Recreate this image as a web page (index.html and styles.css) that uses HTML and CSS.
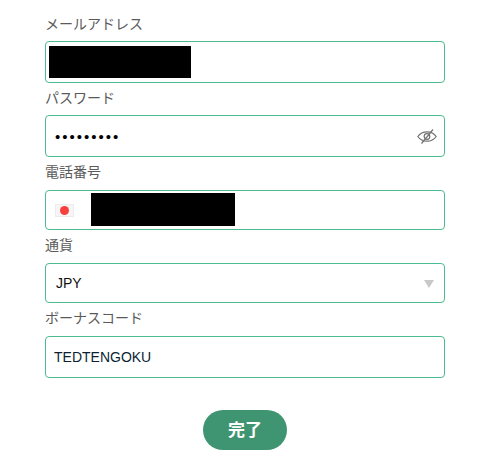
FILE: index.html
```html
<!DOCTYPE html>
<html lang="ja">
<head>
    <meta charset="UTF-8">
    <title>登録</title>
    <link rel="stylesheet" href="styles.css">
</head>
<body>
    <form class="form">
        <div class="field">
            <label class="label">メールアドレス</label>
            <div class="box box-tall">
                <span class="mask mask-mail"></span>
            </div>
        </div>
        <div class="field">
            <label class="label">パスワード</label>
            <div class="box box-tall box-pass">
                <span class="dots">•••••••••</span>
                <svg class="eye" width="20" height="15" viewBox="0 0 20 15" fill="none" stroke="#707070" stroke-width="1.2">
                    <path d="M.8 7.500C3 4.400 6.200 2.800 10 2.800s7 1.600 9.200 4.700c-2.200 3.100-5.400 4.700-9.200 4.700S3 10.600.8 7.500z"/>
                    <circle cx="10" cy="7.500" r="2.800"/>
                    <path d="M16 .5L4.500 14.500"/>
                </svg>
            </div>
        </div>
        <div class="field field-wide">
            <label class="label">電話番号</label>
            <div class="box box-phone">
                <span class="flag"><span class="flag-sun"></span></span>
                <span class="mask mask-phone"></span>
            </div>
        </div>
        <div class="field field-wide">
            <label class="label">通貨</label>
            <div class="box box-select">
                <span class="value">JPY</span>
                <span class="arrow"></span>
            </div>
        </div>
        <div class="field field-wide">
            <label class="label">ボーナスコード</label>
            <div class="box box-tall">
                <span class="value value-code">TEDTENGOKU</span>
            </div>
        </div>
        <div class="actions">
            <button class="submit" type="button">完了</button>
        </div>
    </form>
</body>
</html>
```

FILE: styles.css
```css
html, body {
    margin: 0;
    padding: 0;
    background: #fff;
}

body {
    font-family: "Noto Sans CJK JP", "Liberation Sans", sans-serif;
}

.form {
    width: 400px;
    padding: 9px 0 0 45px;
}

.field {
    display: flex;
    flex-direction: column;
}

.label {
    height: 32px;
    line-height: 29px;
    font-size: 14px;
    color: #5a5a5a;
}

.field-wide .label {
    height: 33px;
}

.box {
    box-sizing: border-box;
    height: 40px;
    display: flex;
    align-items: center;
    border: 1px solid #4cbb8f;
    border-radius: 4px;
    background: #fff;
}

.box-tall {
    height: 42px;
}

.box-pass {
    padding: 0 7px 0 9px;
    justify-content: space-between;
}

.box-phone {
    padding-left: 9px;
}

.box-select {
    padding: 0 10px 0 10px;
    justify-content: space-between;
}

.mask {
    display: block;
    background: #000;
}

.mask-mail {
    width: 142px;
    height: 32px;
    margin-left: 3px;
}

.mask-phone {
    width: 144px;
    height: 33px;
    margin: 0 0 1px 17px;
}

.dots {
    font-family: "Liberation Sans", sans-serif;
    font-size: 15px;
    letter-spacing: 2px;
    color: #000;
}

.eye {
    display: block;
}

.flag {
    box-sizing: border-box;
    width: 19px;
    height: 13px;
    display: flex;
    align-items: center;
    justify-content: center;
    background: #f7f5f5;
    border: 1px solid #ececec;
    margin-top: 1px;
}

.flag-sun {
    width: 9px;
    height: 9px;
    border-radius: 50%;
    background: #f6403f;
}

.value {
    font-family: "Liberation Sans", sans-serif;
    font-size: 14px;
    color: #111;
}

.value-code {
    margin-left: 8px;
    color: #0c1f33;
}

.arrow {
    width: 0;
    height: 0;
    border-left: 5px solid transparent;
    border-right: 5px solid transparent;
    border-top: 8px solid #c8c8c8;
    margin-top: 2px;
}

.actions {
    display: flex;
    justify-content: center;
    margin-top: 32px;
}

.submit {
    width: 84px;
    height: 40px;
    border: none;
    border-radius: 20px;
    background: #3f9571;
    color: #fff;
    font-family: "Noto Sans CJK JP", sans-serif;
    font-size: 17px;
    line-height: 36px;
    font-weight: 700;
    padding: 0 0 3px;
}
```
